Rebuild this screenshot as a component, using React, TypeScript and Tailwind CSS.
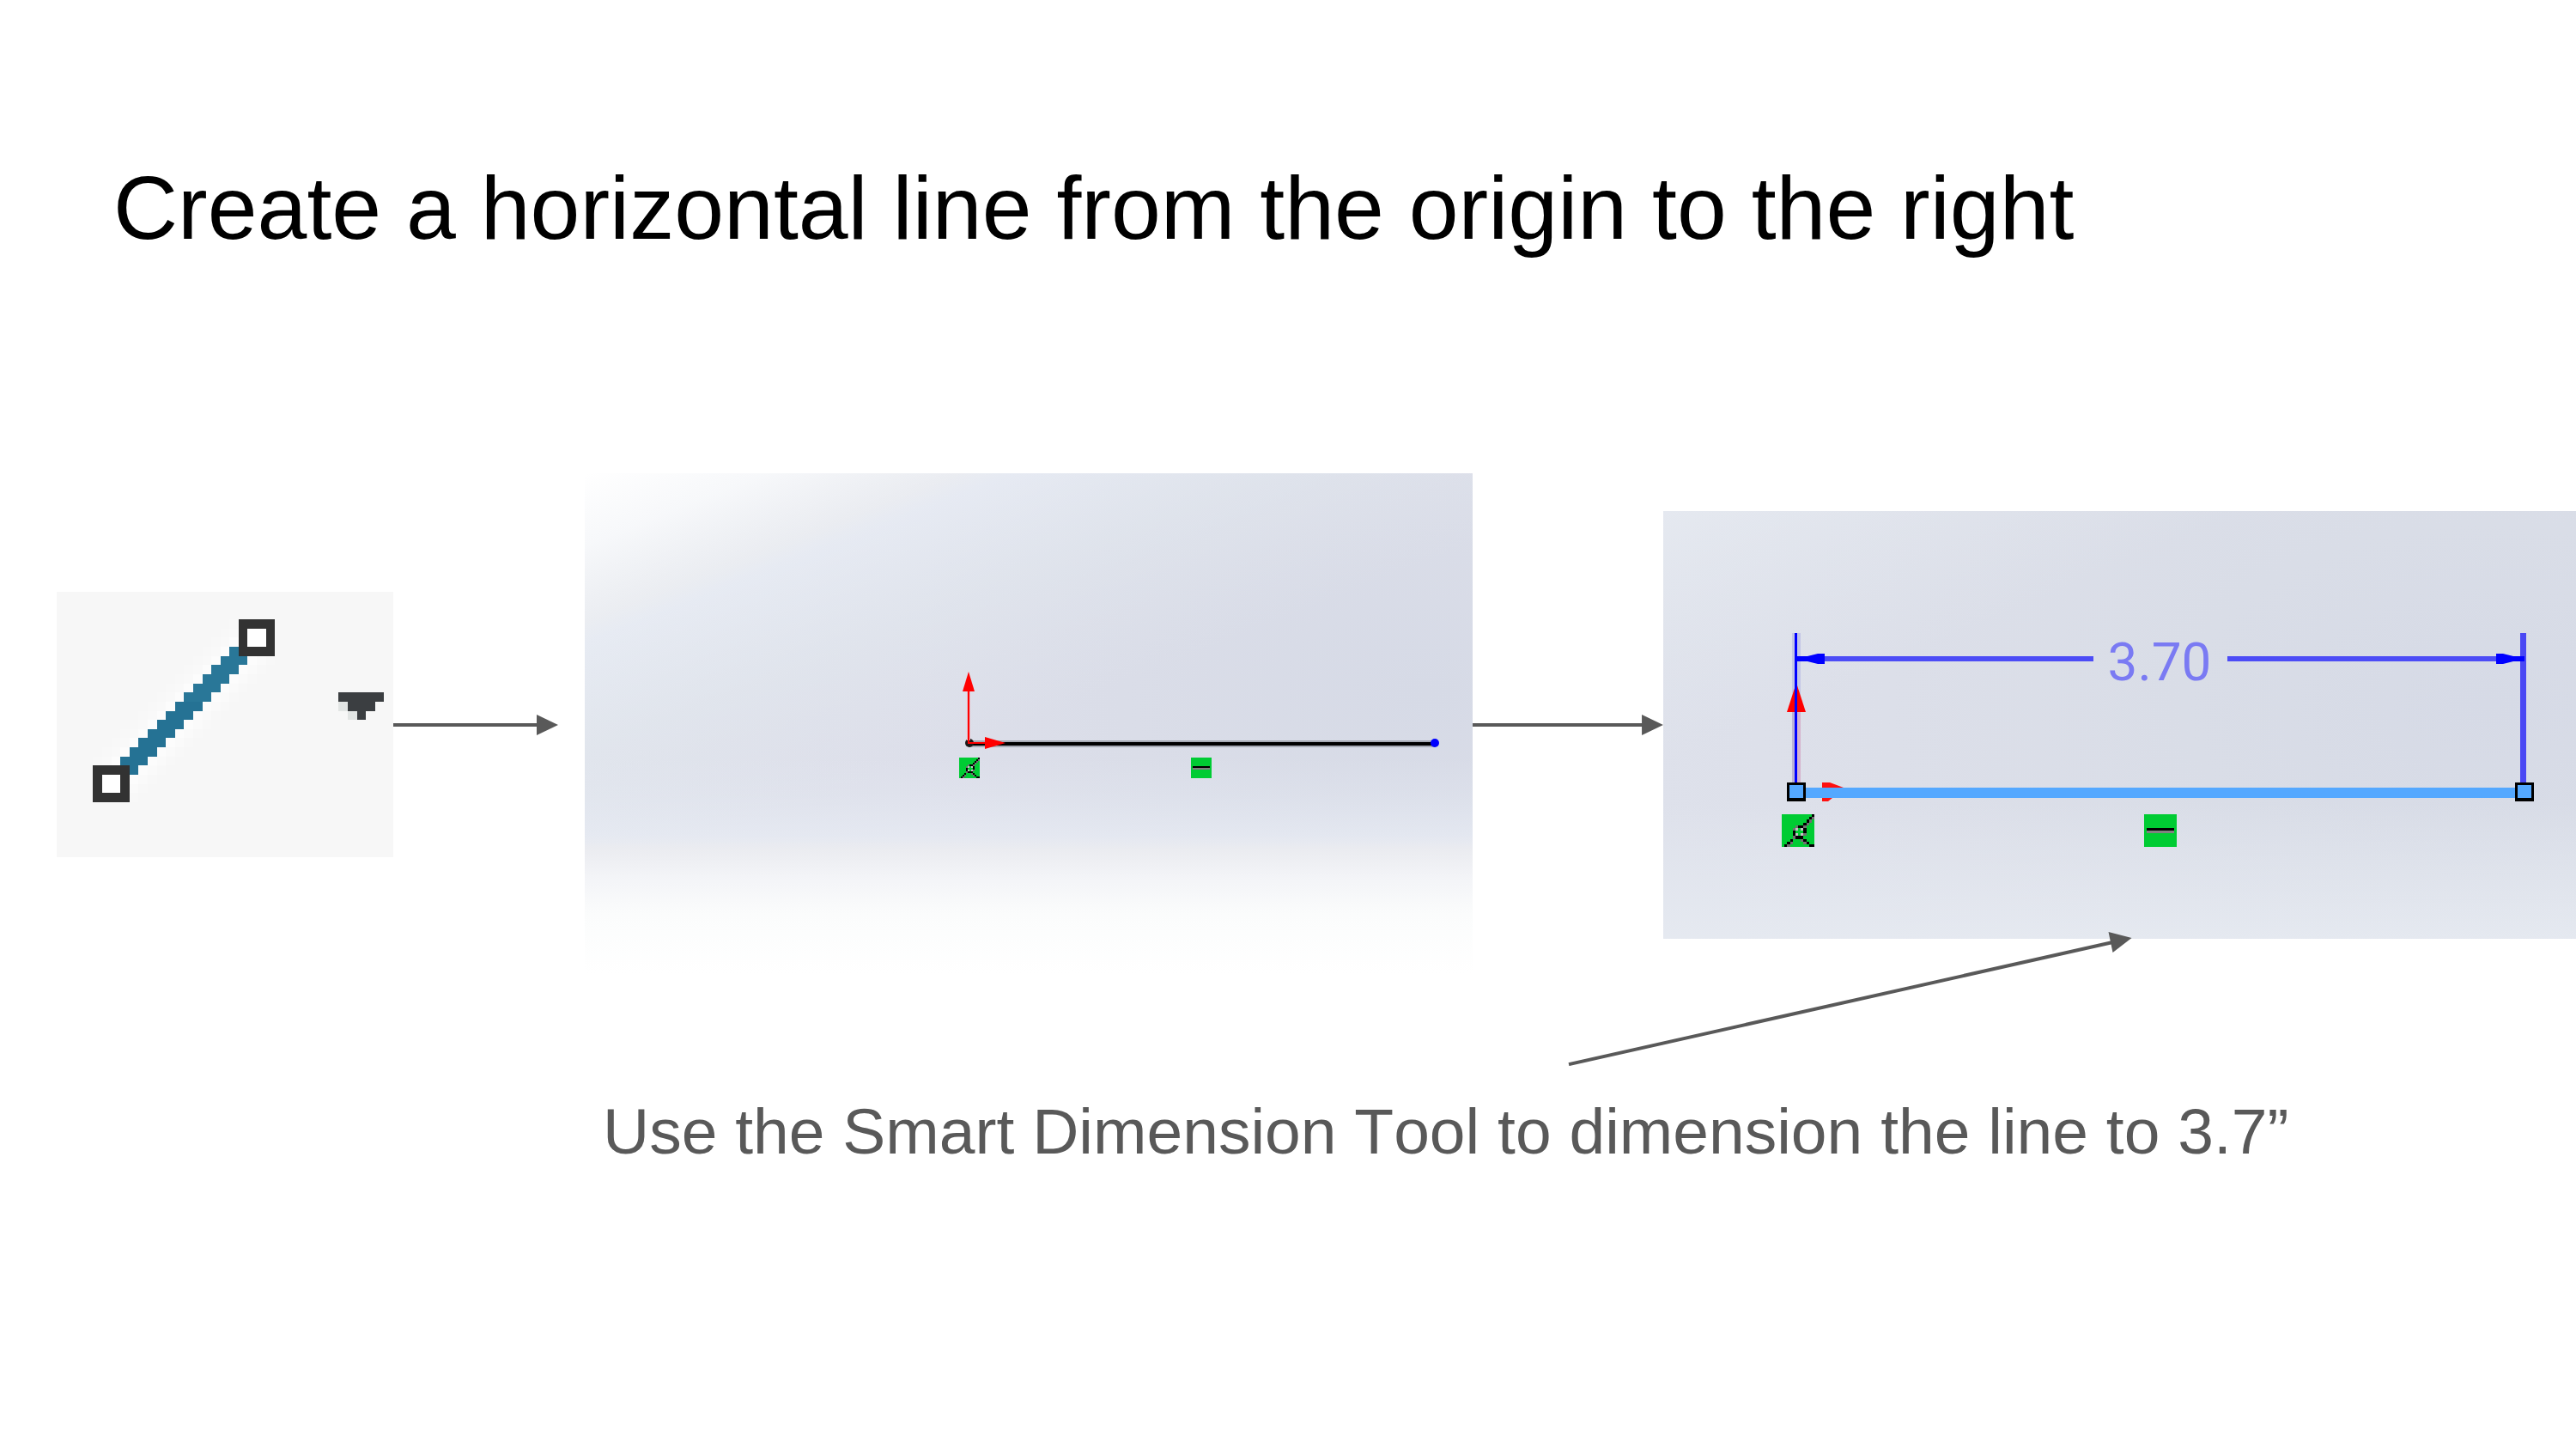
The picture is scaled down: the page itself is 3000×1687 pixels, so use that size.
type Cell = [col: number, row: number];

const BLACK_CELLS: Cell[] = [
  [11, 0], [10, 1], [9, 2], [8, 3], [6, 4], [7, 4],
  [4, 6], [8, 6], [4, 7], [8, 5],
  [5, 8], [6, 8], [7, 8], [3, 9], [8, 9], [2, 10], [9, 10], [1, 11], [11, 11], [10, 11],
];
const GRAY_CELLS: Cell[] = [
  [11, 1], [10, 2], [9, 3], [8, 4], [5, 4], [4, 5], [8, 7], [4, 8],
  [7, 9], [8, 10], [3, 10], [2, 11],
];
const LIGHT_CELLS: Cell[] = [[5, 5], [7, 5], [5, 7], [7, 7]];

/** Green "coincident" relation badge, a 12 by 12 cell bitmap. */
function CoincidentBadge({ x, y, size }: { x: number; y: number; size: number }) {
  const layers: [string, Cell[]][] = [
    ["#000000", BLACK_CELLS],
    ["#707070", GRAY_CELLS],
    ["#c4c4c4", LIGHT_CELLS],
  ];
  return (
    <svg x={x} y={y} width={size} height={size} viewBox="0 0 12 12" shapeRendering="crispEdges">
      <rect width="12" height="12" fill="#00cc33" />
      {layers.map(([fill, cells]) =>
        cells.map(([c, r]) => <rect key={`${fill}${c}-${r}`} x={c} y={r} width="1" height="1" fill={fill} />),
      )}
    </svg>
  );
}

/** Green "horizontal" relation badge. */
function HorizontalBadge({ x, y, size }: { x: number; y: number; size: number }) {
  return (
    <svg x={x} y={y} width={size} height={size} viewBox="0 0 12 12" shapeRendering="crispEdges">
      <rect width="12" height="12" fill="#00cc33" />
      <rect x="1" y="5" width="10" height="1" fill="#000000" />
      <rect x="1" y="6" width="10" height="1" fill="#808080" />
    </svg>
  );
}

const LINE_ROWS = [6, 7, 8, 9, 10, 11, 12, 13, 14, 15, 16, 17, 18, 19];

/** The line tool's toolbar button, drawn on its 37 by 29 pixel grid. */
function LineToolIcon() {
  return (
    <svg viewBox="0 0 392 309" className="block h-auto w-full" role="img" aria-label="Line tool" shapeRendering="crispEdges">
      <rect width="392" height="309" fill="#f7f7f7" />
      <svg width="392" height="309" viewBox="0 0 37 29" preserveAspectRatio="none">
        {[3, 4, 5, ...LINE_ROWS, 20, 21, 22].map((r) => (
          <g key={r}>
            <rect x={Math.max(22 - r, 4)} y={r} width="1" height="1" fill="#f8f8f8" />
            {r < 20 && <rect x={23 - r} y={r} width="1" height="1" fill="#f9f9f9" />}
            {r < 20 && <rect x={24 - r} y={r} width="1" height="1" fill="#fcfcfc" />}
            {r > 6 && <rect x={28 - r} y={r} width="1" height="1" fill="#fcfcfc" />}
            {r > 6 && <rect x={29 - r} y={r} width="1" height="1" fill="#fafafa" />}
            {r > 6 && <rect x={30 - r} y={r} width="1" height="1" fill="#f8f8f8" />}
          </g>
        ))}
        {LINE_ROWS.map((r) => (
          <rect key={r} x={25 - r} y={r} width="3" height="1" fill={r < 12 ? "#297798" : "#257294"} />
        ))}
        <rect x="20" y="3" width="4" height="4" fill="#323232" />
        <rect x="21" y="4" width="2" height="2" fill="#ffffff" />
        <rect x="4" y="19" width="4" height="4" fill="#323232" />
        <rect x="5" y="20" width="2" height="2" fill="#ffffff" />
        <path d="M31 11H36V12H35V13H34V14H33V13H32V12H31Z" fill="#3b3e41" />
        <path d="M31 12H32V13H31ZM32 13H33V14H32Z" fill="#e2e5e4" />
      </svg>
    </svg>
  );
}

/** Connector between two steps; `end` is where the tip sits inside the 223 wide column. */
function StepArrow({ end }: { end: number }) {
  return (
    <svg viewBox="0 0 223 26" className="block h-auto w-full" aria-hidden="true">
      <path d={`M0 13H${end - 24}`} stroke="#595959" strokeWidth="4" />
      <path d={`M${end} 13L${end - 25} 1V25Z`} fill="#595959" />
    </svg>
  );
}

function SketchView() {
  return (
    <svg viewBox="0 0 1034 585" className="block h-auto w-full" role="img" aria-label="Horizontal line drawn from the origin">
      <defs>
        <radialGradient id="sketch-base" gradientUnits="userSpaceOnUse" cx="0" cy="0" r="1000" gradientTransform="translate(980 255) scale(1 0.6)">
          <stop offset="0" stopColor="#d6dae6" />
          <stop offset="0.35" stopColor="#dadde8" />
          <stop offset="0.65" stopColor="#dddfea" />
          <stop offset="1" stopColor="#dfe2eb" />
        </radialGradient>
        <linearGradient id="sketch-corner" gradientUnits="userSpaceOnUse" x1="0" y1="0" x2="170" y2="428">
          <stop offset="0" stopColor="#ffffff" />
          <stop offset="0.17" stopColor="#fbfcfd" stopOpacity="0.85" />
          <stop offset="0.35" stopColor="#f1f3f5" stopOpacity="0.65" />
          <stop offset="0.4" stopColor="#ecf1f8" stopOpacity="0.6" />
          <stop offset="0.65" stopColor="#e3e9ef" stopOpacity="0.5" />
          <stop offset="1" stopColor="#e0e4ec" stopOpacity="0" />
        </linearGradient>
        <linearGradient id="sketch-floor" gradientUnits="userSpaceOnUse" x1="0" y1="330" x2="0" y2="585">
          <stop offset="0" stopColor="#e6ebf3" stopOpacity="0" />
          <stop offset="0.17" stopColor="#e6ebf3" stopOpacity="0.25" />
          <stop offset="0.36" stopColor="#e8ecf4" stopOpacity="0.7" />
          <stop offset="0.42" stopColor="#ecedf1" stopOpacity="0.9" />
          <stop offset="0.55" stopColor="#f4f5f8" stopOpacity="0.96" />
          <stop offset="0.72" stopColor="#fbfcfc" />
          <stop offset="1" stopColor="#ffffff" />
        </linearGradient>
      </defs>
      <rect width="1034" height="585" fill="url(#sketch-base)" />
      <rect width="1034" height="585" fill="url(#sketch-corner)" />
      <rect width="1034" height="585" fill="url(#sketch-floor)" />

      <rect x="447" y="311" width="543" height="8" fill="#a6aab4" />
      <rect x="447" y="313" width="543" height="4" fill="#000000" />
      <circle cx="448" cy="314" r="5" fill="#1a1a1a" />
      <path d="M447 311V254" stroke="#e8b8c4" strokeWidth="4" />
      <path d="M447 315V254M446 314H468" stroke="#ff0000" strokeWidth="2" />
      <path d="M447 231L454 254H440Z" fill="#ff0000" />
      <path d="M490 314L466 307V321Z" fill="#ff0000" />
      <circle cx="990" cy="314" r="5" fill="#0000ff" />
      <CoincidentBadge x={436} y={331} size={24} />
      <HorizontalBadge x={706} y={331} size={24} />
    </svg>
  );
}

function DimensionView() {
  return (
    <svg viewBox="0 0 1063 498" className="block h-auto w-full" role="img" aria-label="Line dimensioned to 3.70">
      <defs>
        <radialGradient id="dim-base" gradientUnits="userSpaceOnUse" cx="0" cy="0" r="1000" gradientTransform="translate(960 225) scale(1 0.6)">
          <stop offset="0" stopColor="#d6dae6" />
          <stop offset="0.35" stopColor="#d9dde7" />
          <stop offset="0.7" stopColor="#dcdfe9" />
          <stop offset="1" stopColor="#dee1eb" />
        </radialGradient>
        <linearGradient id="dim-corner" gradientUnits="userSpaceOnUse" x1="0" y1="0" x2="110" y2="250">
          <stop offset="0" stopColor="#e8ecf2" stopOpacity="0.7" />
          <stop offset="1" stopColor="#e3e8ee" stopOpacity="0" />
        </linearGradient>
        <linearGradient id="dim-floor" gradientUnits="userSpaceOnUse" x1="0" y1="340" x2="0" y2="498">
          <stop offset="0" stopColor="#e6eaf1" stopOpacity="0" />
          <stop offset="1" stopColor="#e6eaf1" stopOpacity="0.9" />
        </linearGradient>
      </defs>
      <rect width="1063" height="498" fill="url(#dim-base)" />
      <rect width="1063" height="498" fill="url(#dim-corner)" />
      <rect width="1063" height="498" fill="url(#dim-floor)" />

      <rect x="150" y="142" width="10" height="92" fill="#c4c6e6" />
      <path d="M155 200L166 234H144Z" fill="#ff0000" />
      <rect x="150" y="234" width="4" height="82" fill="#bcb3d6" />
      <rect x="156" y="234" width="4" height="82" fill="#d6b3cd" />
      <path d="M185 316H194L210 322H185ZM185 334H197L192 338H185Z" fill="#ff1010" />

      <rect x="153" y="142" width="3" height="175" fill="#0000ff" />
      <rect x="998" y="142" width="7" height="175" fill="#4a48f4" />
      <path d="M188 169H501V175H188ZM657 169H970V175H657Z" fill="#4c4cf6" />
      <path d="M156 169H168L180 166H188V178H180L168 175H156Z" fill="#0000ff" />
      <path d="M1003 169H990L978 166H970V178H978L990 175H1003Z" fill="#0000ff" />
      <text x="578" y="197" textAnchor="middle" fill="#7a7af3" className="font-['Roboto',sans-serif] text-[62px] font-normal">
        3.70
      </text>

      <rect x="166" y="322" width="826" height="12" fill="#54a8ff" />
      <path d="M144 316H166V338H144ZM992 316H1014V338H992Z" fill="#000000" />
      <path d="M147 319H163V334H147ZM995 319H1011V334H995Z" fill="#54a8ff" />
      <CoincidentBadge x={138} y={353} size={38} />
      <HorizontalBadge x={560} y={353} size={38} />
    </svg>
  );
}

export default function App() {
  return (
    <main className="min-h-screen overflow-x-hidden bg-white font-['Liberation_Sans',Arial,sans-serif] [font-kerning:none]">
      <h1 className="pt-[182px] pl-[132px] text-[104px] leading-[120px] text-black">
        Create a horizontal line from the origin to the right
      </h1>

      <section className="mt-[249px] grid grid-cols-[392fr_223fr_1034fr_222fr_1063fr] items-center pl-[66px]">
        <LineToolIcon />
        <StepArrow end={192} />
        <SketchView />
        <StepArrow end={223} />
        <DimensionView />
      </section>

      <div className="relative -mt-[52px] pl-[60.8%]">
        <svg viewBox="0 0 658 157" className="block h-auto w-[56%]" aria-hidden="true">
          <path d="M3 155L636 13" stroke="#595959" strokeWidth="4" />
          <path d="M658 8L631 1L636 25Z" fill="#595959" />
        </svg>
      </div>

      <p className="mt-8 pl-[702px] text-[75px] leading-[88px] text-[#595959]">
        Use the Smart Dimension Tool to dimension the line to 3.7”
      </p>
    </main>
  );
}
